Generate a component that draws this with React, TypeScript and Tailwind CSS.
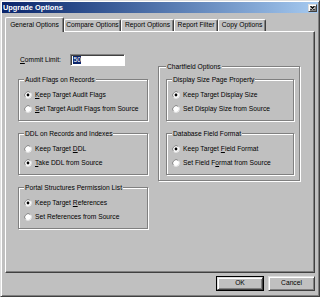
import type { ReactNode } from "react";

const raised =
	"border border-t-[#dfdfdf] border-l-[#dfdfdf] border-r-[#404040] border-b-[#404040] shadow-[inset_1px_1px_0_#fff,inset_-1px_-1px_0_#808080]";

function Radio({ checked }: { checked?: boolean }) {
	return (
		<svg width="8" height="8" viewBox="0 0 8 8" className="shrink-0">
			<circle cx="4" cy="4" r="3.5" fill="#fff" />
			<path d="M1.53 6.47 A3.5 3.5 0 0 1 6.47 1.53" stroke="#808080" strokeWidth="1" fill="none" />
			<path d="M6.47 1.53 A3.5 3.5 0 0 1 1.53 6.47" stroke="#dfdfdf" strokeWidth="1" fill="none" />
			{checked && <circle cx="4" cy="4" r="1.4" fill="#000" />}
		</svg>
	);
}

function Option({ checked, children }: { checked?: boolean; children: ReactNode }) {
	return (
		<div className="flex items-center gap-[3px] h-[14px]">
			<Radio checked={checked} />
			<span className="whitespace-nowrap">{children}</span>
		</div>
	);
}

function Group({ title, children, className = "" }: { title: string; children: ReactNode; className?: string }) {
	return (
		<fieldset
			className={`border border-[#808080] shadow-[1px_1px_0_#fff,inset_1px_1px_0_#fff] pt-[4px] pb-[4px] ${className}`}
		>
			<legend className="px-[1px] leading-[9px] bg-[#c0c0c0] whitespace-nowrap">{title}</legend>
			{children}
		</fieldset>
	);
}

const tabs = [
	{ label: "Compare Options", w: "w-[57px]" },
	{ label: "Report Options", w: "w-[53px]" },
	{ label: "Report Filter", w: "w-[44px]" },
	{ label: "Copy Options", w: "w-[48px]" },
];

export default function App() {
	return (
		<div
			className={`w-[320px] h-[297px] bg-[#c0c0c0] ${raised} p-[1px] flex flex-col text-[6.7px] text-black font-['Liberation_Sans',Arial,sans-serif]`}
		>
			{/* Title bar */}
			<div className="h-[11px] flex items-center justify-between bg-gradient-to-r from-[#0a246a] to-[#a6caf0]">
				<span className="pl-[1px] text-[7.4px] font-bold text-white leading-none">Upgrade Options</span>
				<div className={`w-[9px] h-[8px] mr-[1px] bg-[#c0c0c0] ${raised} flex items-center justify-center`}>
					<svg width="5" height="4" viewBox="0 0 5 4">
						<path d="M0.5 0 L4.5 4 M4.5 0 L0.5 4" stroke="#000" strokeWidth="1.1" />
					</svg>
				</div>
			</div>

			{/* Tabs */}
			<div className="mt-[4px] h-[14px] px-[3px] flex items-end">
				<div className="relative z-10 -mb-[1px] h-[15px] w-[59px] bg-[#c0c0c0] border-t border-l border-white border-r border-r-[#404040] shadow-[inset_-1px_0_0_#808080] rounded-t-[2px] flex items-center justify-center">
					General Options
				</div>
				{tabs.map(t => (
					<div
						key={t.label}
						className={`h-[12px] ${t.w} border-t border-l border-white border-r border-r-[#404040] shadow-[inset_-1px_0_0_#808080] rounded-t-[2px] flex items-center justify-center whitespace-nowrap`}
					>
						{t.label}
					</div>
				))}
			</div>

			{/* Panel */}
			<div className="mx-[3px] h-[242px] border border-t-white border-l-white border-r-[#404040] border-b-[#404040] shadow-[inset_-1px_-1px_0_#808080] flex items-start pl-[12px]">
				{/* Left column */}
				<div className="w-[130px] pt-[22px] flex flex-col">
					<div className="h-[12px] flex items-center">
						<span className="w-[52px] pl-[2px]">
							<u>C</u>ommit Limit:
						</span>
						<div className="w-[55px] h-[12px] bg-white border border-t-[#808080] border-l-[#808080] border-r-white border-b-white shadow-[inset_1px_1px_0_#404040] flex items-center pl-[2px]">
							<span className="bg-[#0a246a] text-white px-[0.5px] leading-[8px]">50</span>
						</div>
					</div>

					<div className="mt-[9px] flex flex-col gap-[8px]">
						<Group title="Audit Flags on Records" className="px-[5px]">
							<Option checked><u>K</u>eep Target Audit Flags</Option>
							<Option><u>S</u>et Target Audit Flags from Source</Option>
						</Group>
						<Group title="DDL on Records and Indexes" className="px-[5px]">
							<Option>Keep Target <u>D</u>DL</Option>
							<Option checked><u>T</u>ake DDL from Source</Option>
						</Group>
						<Group title="Portal Structures Permission List" className="px-[5px]">
							<Option checked>Keep Target <u>R</u>eferences</Option>
							<Option>Set References from Source</Option>
						</Group>
					</div>
				</div>

				{/* Right column */}
				<div className="w-[142px] ml-[10px] pt-[30px]">
					<Group title="Chartfield Options" className="pl-[7px] pr-[5px] pb-[5px]">
						<div className="flex flex-col gap-[8px]">
							<Group title="Display Size Page Property" className="px-[5px]">
								<Option checked>Keep Target Display Size</Option>
								<Option>Set Display Size from Source</Option>
							</Group>
							<Group title="Database Field Format" className="px-[5px]">
								<Option checked>Keep Target <u>F</u>ield Format</Option>
								<Option>Set Field F<u>o</u>rmat from Source</Option>
							</Group>
						</div>
					</Group>
				</div>
			</div>

			{/* Buttons */}
			<div className="mt-[3px] h-[15px] flex justify-end gap-[4px] pr-[3px]">
				<button className="w-[48px] h-[15px] border border-black p-0 bg-[#c0c0c0]">
					<div className={`w-full h-full ${raised} flex items-center justify-center`}>OK</div>
				</button>
				<button className={`w-[47px] h-[15px] bg-[#c0c0c0] ${raised} flex items-center justify-center`}>
					Cancel
				</button>
			</div>
		</div>
	);
}
